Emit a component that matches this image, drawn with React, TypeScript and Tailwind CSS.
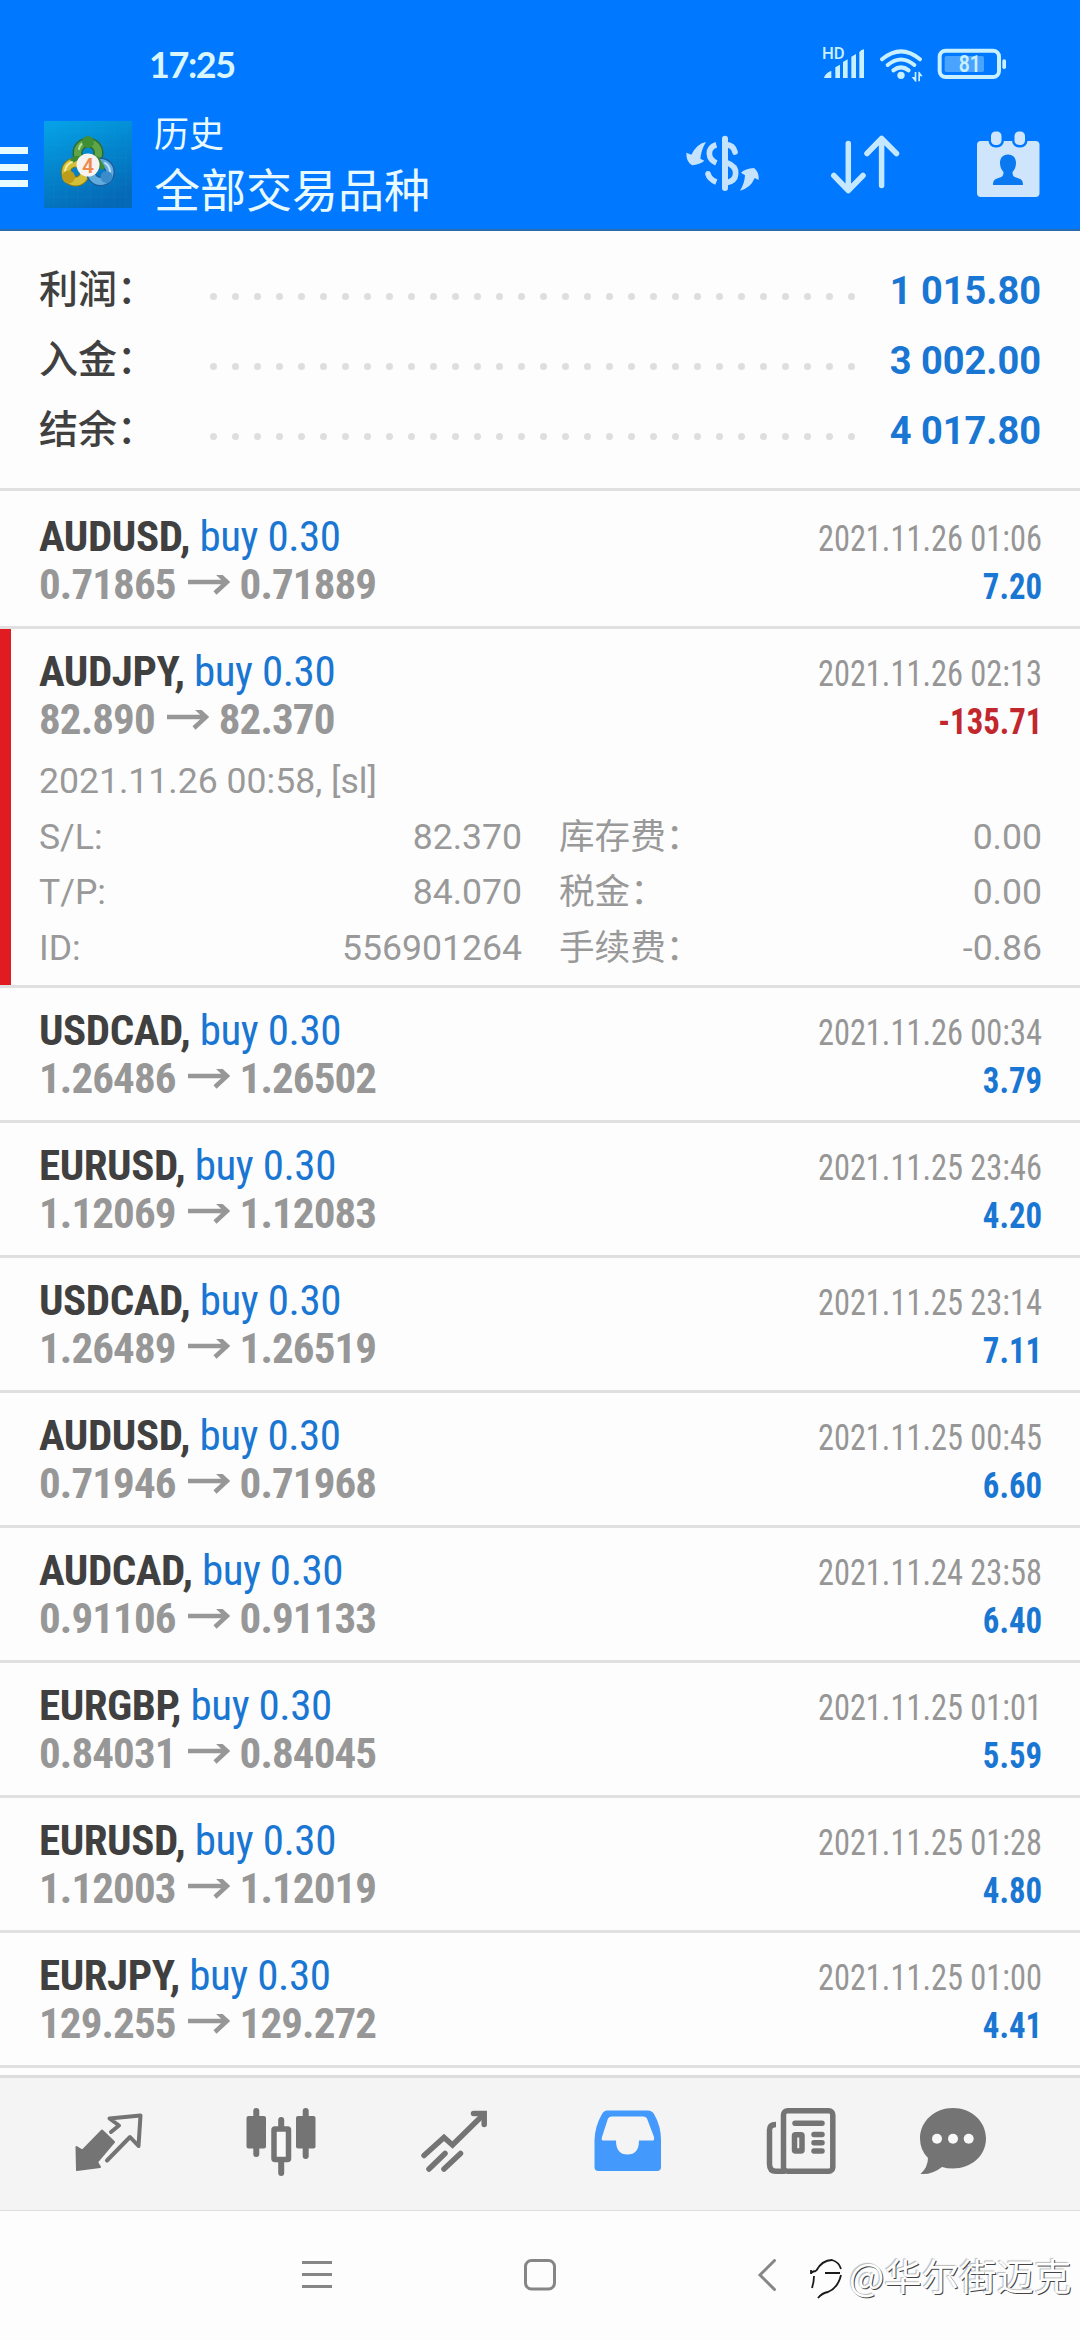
import React from 'react';

interface Deal {
    symbol: string;
    open: string;
    close: string;
    time: string;
    profit: string;
    details?: {
        openTime: string;
        rows: [string, string, string, string][];
    };
}

const SUMMARY: [string, string][] = [
    ['利润：', '1 015.80'],
    ['入金：', '3 002.00'],
    ['结余：', '4 017.80'],
];

const DEALS: Deal[] = [
    { symbol: 'AUDUSD', open: '0.71865', close: '0.71889', time: '2021.11.26 01:06', profit: '7.20' },
    {
        symbol: 'AUDJPY',
        open: '82.890',
        close: '82.370',
        time: '2021.11.26 02:13',
        profit: '-135.71',
        details: {
            openTime: '2021.11.26 00:58, [sl]',
            rows: [
                ['S/L:', '82.370', '库存费：', '0.00'],
                ['T/P:', '84.070', '税金：', '0.00'],
                ['ID:', '556901264', '手续费：', '-0.86'],
            ],
        },
    },
    { symbol: 'USDCAD', open: '1.26486', close: '1.26502', time: '2021.11.26 00:34', profit: '3.79' },
    { symbol: 'EURUSD', open: '1.12069', close: '1.12083', time: '2021.11.25 23:46', profit: '4.20' },
    { symbol: 'USDCAD', open: '1.26489', close: '1.26519', time: '2021.11.25 23:14', profit: '7.11' },
    { symbol: 'AUDUSD', open: '0.71946', close: '0.71968', time: '2021.11.25 00:45', profit: '6.60' },
    { symbol: 'AUDCAD', open: '0.91106', close: '0.91133', time: '2021.11.24 23:58', profit: '6.40' },
    { symbol: 'EURGBP', open: '0.84031', close: '0.84045', time: '2021.11.25 01:01', profit: '5.59' },
    { symbol: 'EURUSD', open: '1.12003', close: '1.12019', time: '2021.11.25 01:28', profit: '4.80' },
    { symbol: 'EURJPY', open: '129.255', close: '129.272', time: '2021.11.25 01:00', profit: '4.41' },
];

const StatusIcons: React.FC = () => (
    <svg className="w-[200px] h-[50px]" viewBox="0 0 600 150" fill="#c8f0ff" stroke="none">
        <text x="36" y="57" fontSize="48" fontWeight="500" fontFamily="Roboto, sans-serif" textLength="68" lengthAdjust="spacingAndGlyphs">HD</text>
        <path d="M42 114q2-14 22-22v22zM76 114V82l14-8v40zM99 114V66l14-8v56zM124 114V50l14-8v72zM148 114V36q6-8 14-8v86z" />
        <g fill="none" stroke="#c8f0ff" strokeWidth="12" strokeLinecap="round">
            <path d="M216 58Q273 10 330 58" />
            <path d="M233 75Q273 42 313 75" />
            <path d="M250 91Q273 73 296 91" />
        </g>
        <circle cx="273" cy="106" r="11" />
        <path d="M314 96h5v29h-3l-11-14h9zM325 124V95h3l10 14h-8v15z" />
        <rect x="389" y="32" width="178" height="79" rx="18" fill="none" stroke="#c8f0ff" strokeWidth="12" />
        <rect x="404" y="48" width="118" height="48" rx="5" fill="#4aa3ff" />
        <rect x="577" y="58" width="11" height="29" rx="5" />
        <text x="446" y="97" fontSize="70" fontWeight="600" fontFamily="Roboto, sans-serif" textLength="66" lengthAdjust="spacingAndGlyphs">81</text>
    </svg>
);

const AppLogo: React.FC = () => (
    <svg className="w-[88px] h-[87px]" viewBox="0 0 88 87">
        <defs>
            <linearGradient id="tile" x1="0.2" y1="0" x2="0.6" y2="1">
                <stop offset="0" stopColor="#05a0e6" />
                <stop offset="0.5" stopColor="#0383cb" />
                <stop offset="1" stopColor="#0568b6" />
            </linearGradient>
        </defs>
        <rect width="88" height="87" fill="url(#tile)" />
        <path d="M3 11h82M3 24h82M3 37h82M3 50h82M3 63h82M3 76h82M10 2v83M22 2v83M34 2v83M46 2v83M58 2v83M70 2v83M82 2v83" stroke="#4cc4f0" strokeOpacity="0.08" fill="none" />
        <g fill="none" strokeLinecap="round">
            <circle cx="44" cy="32" r="10.500" stroke="#2c6b2b" strokeWidth="10" />
            <circle cx="44" cy="32" r="10.500" stroke="#5fa548" strokeWidth="7" />
            <circle cx="31.500" cy="51" r="9.500" stroke="#8a7a14" strokeWidth="10" />
            <circle cx="31.500" cy="51" r="9.500" stroke="#d3bf38" strokeWidth="8" />
            <circle cx="56.500" cy="51" r="9.500" stroke="#1b5f9f" strokeWidth="10" />
            <circle cx="56.500" cy="51" r="9.500" stroke="#62abdd" strokeWidth="7" />
            <path d="M53 38L58 46M29 39Q34 36 38 38" stroke="#3d8a35" strokeWidth="5" />
            <path d="M35 28Q36 22 42 21" stroke="#b6dca0" strokeWidth="2" />
            <path d="M21 50Q22 43 28 41" stroke="#f3eda0" strokeWidth="2" />
            <path d="M61 42Q66 45 66 51" stroke="#c3e4f7" strokeWidth="2" />
        </g>
        <circle cx="44" cy="21" r="6" fill="#3f8f35" />
        <circle cx="24.500" cy="56" r="6.500" fill="#bd9c1a" />
        <circle cx="62.500" cy="56" r="6" fill="#3c8ccb" />
        <circle cx="44" cy="44" r="11.500" fill="#f6f3f0" />
        <text x="44" y="51.500" textAnchor="middle" fontSize="21" fontWeight="600" fontFamily="Roboto, sans-serif" fill="#ee8a4c">4</text>
    </svg>
);

const CurrencyIcon: React.FC = () => (
    <svg className="w-[90px] h-[90px]" viewBox="0 0 270 270" fill="none" stroke="#c6e3fd" strokeWidth="17">
        <path d="M135 56v148" strokeWidth="18" strokeLinecap="round" />
        <path d="M109 74Q88 80 88 101Q89 120 109 129" />
        <path d="M140 74Q160 76 165 96" strokeLinecap="round" />
        <path d="M84 161Q88 178 109 186" />
        <circle cx="84" cy="161" r="8" fill="#c6e3fd" stroke="none" />
        <path d="M140 128Q169 138 167 162Q165 184 140 188" />
        <path d="M78 66Q52 70 34 104L19 98Q18 125 36 136Q60 133 73 122L61 116Q64 88 78 66z" fill="#c6e3fd" stroke="none" />
        <path d="M180 212Q212 204 224 174L236 180Q238 156 222 144Q196 146 183 158L195 166Q194 190 180 212z" fill="#c6e3fd" stroke="none" />
    </svg>
);

const SortIcon: React.FC = () => (
    <svg className="w-[90px] h-[90px]" viewBox="820 120 90 90" fill="none" stroke="#c6e8ff" strokeWidth="5.5" strokeLinecap="round" strokeLinejoin="round">
        <path d="M848.3 143.500V190M833.800 175.500L848.300 190.500L863 175.500" />
        <path d="M881.600 185.500V138.500M867 153.500L881.600 138.500L896.500 153.500" />
    </svg>
);

const CalendarIcon: React.FC = () => (
    <svg className="w-[90px] h-[90px]" viewBox="963 120 90 90" fill="#cfe5fb">
        <rect x="977" y="141" width="62.500" height="56" rx="4" />
        <rect x="991" y="131.500" width="10.500" height="13.500" rx="4.500" stroke="#0078ff" strokeWidth="5" paintOrder="stroke" />
        <rect x="1014.500" y="131.500" width="10.500" height="13.500" rx="4.500" stroke="#0078ff" strokeWidth="5" paintOrder="stroke" />
        <path d="M1008 154.500c5.500 0 8 4 8 8.500c0 4-1.500 7-3.500 9c0 4 1.500 5 5 6c4 1.200 5.500 2.500 5.500 7h-30c0-4.500 1.500-5.800 5.500-7c3.500-1 5-2 5-6c-2-2-3.500-5-3.500-9c0-4.500 2.500-8.500 8-8.500z" fill="#0a78f0" />
    </svg>
);

const DealRow: React.FC<{ deal: Deal }> = ({ deal }) => {
    const loss = deal.profit.startsWith('-');

    return (
        <div className={`relative pl-[39px] pr-[38px] pt-[19px] border-b-[3px] border-[#e0e0e0] ${deal.details ? 'h-[359px]' : 'h-[135px]'}`}>
            {deal.details && <div className="absolute left-0 top-0 bottom-0 w-[11px] bg-[#e01b22]" />}
            <div className="flex h-[48px] items-baseline justify-between font-['Roboto_Condensed'] text-[43px] leading-[47px]">
                <div className="tracking-[-0.45px]">
                    <span className="font-bold text-[#404040]">{deal.symbol},</span>
                    <span className="text-[#1976d2]"> buy 0.30</span>
                </div>
                <span className="origin-right scale-x-90 text-[36px] leading-[40px] text-[#969696]">{deal.time}</span>
            </div>
            <div className="flex h-[48px] items-baseline justify-between font-['Roboto_Condensed'] text-[43px] font-bold leading-[47px]">
                <div className="flex items-baseline tracking-[-0.9px] text-[#979797]">
                    <span>{deal.open}</span>
                    <svg className="w-[42px] h-[24px] ml-[12px] mr-[10px]" viewBox="0 0 42 24" fill="none" stroke="#979797" strokeWidth="4.500">
                        <path d="M0 7H40M27-4L39 7L27 18" />
                    </svg>
                    <span>{deal.close}</span>
                </div>
                <span className={`origin-right scale-x-[0.91] text-[36px] leading-[40px] ${loss ? 'text-[#c1272d]' : 'text-[#1976d2]'}`}>{deal.profit}</span>
            </div>

            {deal.details && (
                <div className="mt-[10px] font-[Roboto,'Noto_Sans_CJK_SC',sans-serif] text-[35.6px] leading-[55.6px] text-[#999999]">
                    <div>{deal.details.openTime}</div>
                    {deal.details.rows.map(([label, value, feeLabel, fee]) => (
                        <div key={label} className="flex">
                            <div className="flex w-[483px] justify-between">
                                <span>{label}</span>
                                <span>{value}</span>
                            </div>
                            <div className="flex flex-1 justify-between pl-[37px]">
                                <span>{feeLabel}</span>
                                <span>{fee}</span>
                            </div>
                        </div>
                    ))}
                </div>
            )}
        </div>
    );
};

const TabBar: React.FC = () => (
    <nav className="flex h-[136px] items-center border-t-[3px] border-b-[1px] border-[#dddddd] bg-[#f4f4f4] pb-[4px] pl-[74px]">
        <svg className="w-[70px] h-[72px]" viewBox="74 2106 70 72">
            <path d="M111 2132L119 2125.500L109.500 2118.500L140.500 2115.500L138.500 2146L130 2137L107 2160.500" fill="none" stroke="#747474" strokeWidth="4" strokeLinejoin="round" strokeLinecap="round" />
            <path d="M102 2130.500L114 2142L97 2162L100 2167L77 2170L76.500 2147L82.500 2150.500z" fill="#747474" stroke="#747474" strokeWidth="2" strokeLinejoin="round" />
        </svg>
        <svg className="ml-[100px] w-[74px] h-[72px]" viewBox="244 2106 74 72" fill="#747474">
            <rect x="246.500" y="2116" width="19.500" height="32.500" rx="2" />
            <rect x="296" y="2116" width="19.500" height="32.500" rx="2" />
            <path d="M256.300 2111V2154M305.700 2111V2156M281.200 2120V2130M281.200 2160V2173" stroke="#747474" strokeWidth="6" strokeLinecap="round" />
            <rect x="274" y="2129" width="14.500" height="30.500" rx="1" fill="#f8f8f8" stroke="#747474" strokeWidth="5.500" />
        </svg>
        <svg className="ml-[102px] w-[70px] h-[72px]" viewBox="420 2106 70 72" fill="none" stroke="#747474" strokeWidth="5.500" strokeLinecap="round">
            <path d="M424 2155.500L444 2137.500L452.500 2145L483 2115" />
            <path d="M473.500 2113.500H484.200V2124.500" />
            <path d="M429 2169L445 2153.500M444 2169L460.500 2153.500" />
        </svg>
        <svg className="ml-[102px] w-[70px] h-[72px]" viewBox="592 2106 70 72" fill="#4499fc">
            <path fillRule="evenodd" d="M607 2110.500H648Q652 2110.500 654 2114Q661 2126 661 2140V2167Q661 2171 657 2171H598.500Q594.500 2171 594.500 2167V2140Q595 2126 602 2114Q604 2110.500 607 2110.500zM612 2116.500Q609 2116.500 608 2118.500L602 2137Q601 2140.500 603 2140.500H616Q616 2154.500 627.500 2154.500Q639 2154.500 639 2140.500H653Q654.500 2140.500 654 2137L647 2118.500Q646 2116.500 643 2116.500z" />
        </svg>
        <svg className="ml-[102px] w-[74px] h-[72px]" viewBox="764 2106 74 72" fill="none" stroke="#747474" strokeWidth="5.500" strokeLinecap="round">
            <rect x="783.500" y="2110.800" width="49.300" height="60.500" rx="4" />
            <path d="M776 2124.500Q769.500 2124.500 769.500 2130V2164Q769.500 2171.300 776 2171.300H785" strokeLinecap="butt" />
            <path d="M795 2123.300H822M814 2134.500H822M814 2142.800H822M814 2151H822" />
            <rect x="794.500" y="2134.800" width="7.500" height="16.200" rx="1" />
        </svg>
        <svg className="ml-[80px] w-[72px] h-[72px]" viewBox="918 2106 72 72" fill="#747474">
            <path d="M953 2108C971 2108 986 2121 986 2138.500C986 2156 971 2168.500 953 2168.500Q947 2168.500 942 2167Q932 2175 920.500 2174Q928 2167 928 2158Q920 2150 920 2138.500C920 2121 935 2108 953 2108z" />
            <circle cx="937" cy="2138.800" r="5" fill="#f8f8f8" />
            <circle cx="953" cy="2138.800" r="5" fill="#f8f8f8" />
            <circle cx="968.700" cy="2138.800" r="5" fill="#f8f8f8" />
        </svg>
    </nav>
);

const SystemBar: React.FC = () => (
    <div className="relative flex h-[129px] items-center bg-[#fdfdfd] pb-[3px] pl-[300px]">
        <svg className="w-[34px] h-[36px]" viewBox="300 2256 34 36" stroke="#868686" strokeWidth="2.800">
            <path d="M302 2262.500H332M302 2274.500H332M302 2286.500H332" />
        </svg>
        <svg className="ml-[188px] w-[36px] h-[36px]" viewBox="522 2256 36 36" fill="none" stroke="#868686" strokeWidth="3">
            <rect x="525.500" y="2260.500" width="29" height="28.500" rx="6" />
        </svg>
        <svg className="ml-[198px] w-[24px] h-[36px]" viewBox="756 2256 24 36" fill="none" stroke="#868686" strokeWidth="3" strokeLinecap="round">
            <path d="M774.500 2260.500L760 2275L774.500 2289.500" />
        </svg>
        <div className="absolute left-[808px] top-[36px] flex h-[56px] items-center gap-[5px] whitespace-nowrap">
            <svg className="mt-[10px] w-[36px] h-[48px]" viewBox="0 0 36 48" fill="none" stroke="#1a1a1a" strokeWidth="1.800">
                <path d="M8 15Q14 4 24 4Q31 6 33 13M3 17Q5 15 8 15M3 14V18M6 20Q6 26 4 32M17 17H32M33 19Q30 32 20 36Q14 37 10 42" />
            </svg>
            <span className="font-['Noto_Sans_CJK_SC',sans-serif] text-[37.4px] leading-[56px] text-white [text-shadow:1px_1px_0_#444,-1px_-1px_1px_#bbb]">@华尔街迈克</span>
        </div>
    </div>
);

export default function App() {
    return (
        <div className="flex h-[2340px] w-[1080px] flex-col overflow-hidden bg-[#fdfdfd]">
            <header className="h-[231px] border-b-2 border-[#2b6cae] bg-[#0078ff] text-[#e8faff]">
                <div className="flex h-[100px] items-center pt-[30px] pl-[149px] pr-[70px]">
                    <span className="pb-[3px] font-[Lato,sans-serif] text-[36px] font-bold leading-[40px] tracking-[-1.4px] text-[#d9f6ff]">17:25</span>
                    <div className="ml-auto">
                        <StatusIcons />
                    </div>
                </div>
                <div className="flex h-[129px] items-center pr-[27px]">
                    <div className="mt-[5px] flex w-[28px] flex-col gap-[9.500px]">
                        <div className="h-[7px] bg-[#e8fbff]" />
                        <div className="h-[7px] bg-[#e8fbff]" />
                        <div className="h-[7px] bg-[#e8fbff]" />
                    </div>
                    <div className="ml-[16px]">
                        <AppLogo />
                    </div>
                    <div className="ml-[22px] pb-[5px] font-['Noto_Sans_CJK_SC',sans-serif]">
                        <div className="text-[35px] leading-[50px]">历史</div>
                        <div className="text-[46px] leading-[60px]">全部交易品种</div>
                    </div>
                    <div className="ml-auto flex items-center">
                        <CurrencyIcon />
                        <div className="ml-[50px]">
                            <SortIcon />
                        </div>
                        <div className="ml-[53px]">
                            <CalendarIcon />
                        </div>
                    </div>
                </div>
            </header>

            <section className="h-[260px] border-b-[3px] border-[#e0e0e0] pl-[39px] pr-[39px] pt-[23px]">
                {SUMMARY.map(([label, value]) => (
                    <div key={label} className="flex h-[70px] items-center">
                        <span className="w-[171px] pb-[5px] font-['Noto_Sans_CJK_SC',sans-serif] text-[39px] font-medium leading-[65px] text-[#404040]">{label}</span>
                        <div className="mt-[15px] flex w-[645px] justify-between">
                            {Array.from({ length: 30 }, (_, i) => (
                                <div key={i} className="size-[7px] rounded-full bg-[#dedede]" />
                            ))}
                        </div>
                        <span className="ml-auto pt-[4px] font-[Roboto,sans-serif] text-[38px] font-bold leading-[66px] text-[#1976d2]">{value}</span>
                    </div>
                ))}
            </section>

            <main className="flex-1 overflow-hidden pt-[3px]">
                {DEALS.map((deal, i) => (
                    <DealRow key={i} deal={deal} />
                ))}
            </main>

            <TabBar />
            <SystemBar />
        </div>
    );
}
